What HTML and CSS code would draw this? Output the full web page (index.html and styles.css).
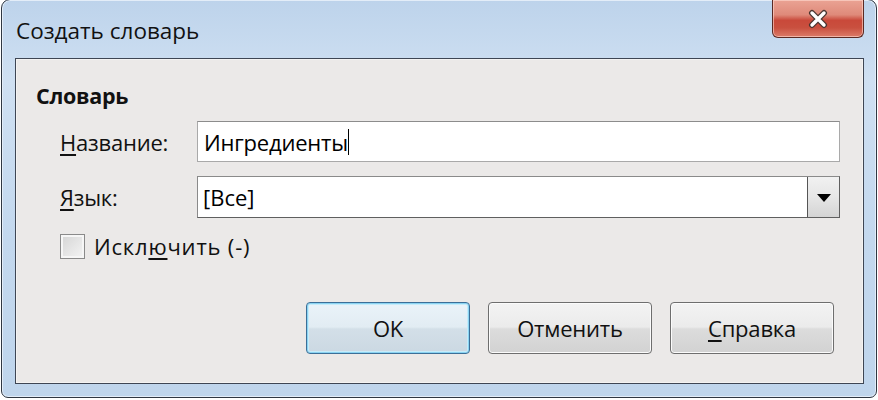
FILE: index.html
```html
<!DOCTYPE html>
<html lang="ru">
<head>
<meta charset="utf-8">
<title>Создать словарь</title>
<link rel="stylesheet" href="styles.css">
</head>
<body>
<div class="window">
  <div class="titlebar">
    <div class="title">Создать словарь</div>
    <div class="close">
      <svg width="24" height="20" viewBox="0 0 24 20">
        <path d="M6 4 L18 16 M18 4 L6 16" stroke="#4a3530" stroke-width="6" stroke-linecap="round" fill="none"/>
        <path d="M6 4 L18 16 M18 4 L6 16" stroke="#ffffff" stroke-width="3.4" stroke-linecap="round" fill="none"/>
      </svg>
    </div>
  </div>
  <div class="client">
    <div class="section">Словарь</div>
    <div class="form">
      <div class="label"><u>Н</u>азвание:</div>
      <div class="input"><span>Ингредиенты</span><span class="caret"></span></div>
      <div class="label"><u>Я</u>зык:</div>
      <div class="combo">
        <div class="combo-value">[Все]</div>
        <div class="combo-btn"><span class="arrow"></span></div>
      </div>
    </div>
    <div class="check-row">
      <span class="checkbox"></span>
      <span class="check-label">Искл<u>ю</u>чить (-)</span>
    </div>
    <div class="buttons">
      <div class="btn default">OK</div>
      <div class="btn">Отменить</div>
      <div class="btn"><u>С</u>правка</div>
    </div>
  </div>
</div>
</body>
</html>
```

FILE: styles.css
```css
* { box-sizing: border-box; }
html, body { margin: 0; padding: 0; background: #ffffff; }
body {
  font-family: "Open Sans", "Noto Sans", sans-serif;
  color: #000;
  width: 878px;
  height: 400px;
  overflow: hidden;
}
.window {
  width: 876px;
  height: 399px;
  margin: -1px 0 0 1px;
  border: 1.5px solid #2f3742;
  border-radius: 9px 9px 7px 7px;
  background: linear-gradient(180deg, #bdd3eb 0%, #cfe0f2 20%, #c3d8ee 60%, #bfd5ec 100%);
  padding: 0 12px 13px 13px;
  display: flex;
  flex-direction: column;
  box-shadow: inset 0 0 0 1px #e3edf8;
}
.titlebar {
  height: 58px;
  flex: none;
  display: flex;
  justify-content: space-between;
  align-items: flex-start;
}
.title {
  font-size: 22.5px;
  padding: 15px 0 0 1px;
  letter-spacing: 0;
  color: #111;
}
.close {
  width: 92px;
  height: 38px;
  border: 1px solid #5b2a24;
  border-top: none;
  border-radius: 0 0 6px 6px;
  background: linear-gradient(180deg, #eaa394 0%, #df8a7a 40%, #c9493a 55%, #c9503f 75%, #dc7b69 100%);
  box-shadow: inset 0 0 0 1px rgba(255,220,210,0.6);
  display: flex;
  align-items: center;
  justify-content: center;
}
.client {
  flex: 1;
  background: #ebe9e8;
  border: 1px solid #3e4654;
  box-shadow: inset 0 0 0 1px #f4f3f2;
  padding: 22px 29px 0 20px;
  display: flex;
  flex-direction: column;
}
.section {
  font-weight: bold;
  font-size: 21.5px;
  height: 30px;
  line-height: 30px;
  color: #111;
  letter-spacing: -0.3px;
}
.form {
  margin-top: 10px;
  display: grid;
  grid-template-columns: 161px 643px;
  row-gap: 14px;
  align-items: center;
}
.label {
  font-size: 22px;
  padding-left: 24px;
  color: #111;
  letter-spacing: -0.2px;
}
u { text-decoration: underline; text-underline-offset: 3px; text-decoration-thickness: 1.5px; }
.input {
  height: 41px;
  background: #fff;
  border: 1px solid #a9a9a9;
  border-top-color: #8c8c8c;
  display: flex;
  align-items: center;
  padding-left: 6px;
  font-size: 22px;
  letter-spacing: -0.2px;
}
.caret {
  width: 1.5px;
  height: 26px;
  background: #000;
}
.combo {
  height: 42px;
  display: flex;
  background: #fff;
  border: 1.5px solid #5f5f5f;
  border-top-color: #8a8a8a;
  border-left-color: #8a8a8a;
}
.combo-value {
  flex: 1;
  font-size: 22px;
  display: flex;
  align-items: center;
  padding-left: 5px;
}
.combo-btn {
  width: 32px;
  border-left: 1.5px solid #555;
  background: linear-gradient(180deg, #f1f1f1 0%, #e6e6e6 50%, #d4d4d4 100%);
  display: flex;
  align-items: center;
  justify-content: center;
}
.arrow {
  width: 0; height: 0;
  border-left: 7px solid transparent;
  border-right: 7px solid transparent;
  border-top: 8px solid #000;
  margin-top: 2px;
}
.check-row {
  margin-top: 15px;
  display: flex;
  align-items: center;
  padding-left: 24px;
  height: 26px;
}
.checkbox {
  width: 25px;
  height: 25px;
  border: 1.5px solid #8a8a8a;
  background: linear-gradient(135deg, #d4d4d4 0%, #e8e8e8 60%, #f4f4f4 100%);
  box-shadow: inset 0 0 0 2px #f6f6f6;
}
.check-label {
  font-size: 22px;
  margin-left: 9px;
  color: #111;
  letter-spacing: 0.8px;
}
.buttons {
  margin-top: 43px;
  display: flex;
  justify-content: flex-end;
  gap: 18px;
}
.btn {
  width: 164px;
  height: 52px;
  border: 1.5px solid #6e6e6e;
  border-radius: 4px;
  background: linear-gradient(180deg, #f3f3f3 0%, #ebebeb 48%, #dcdcdc 52%, #d2d2d2 100%);
  box-shadow: inset 0 0 0 1px #fbfbfb;
  display: flex;
  align-items: center;
  justify-content: center;
  font-size: 22px;
  color: #111;
  letter-spacing: -0.2px;
}
.btn.default {
  border-color: #3b6f98;
  background: linear-gradient(180deg, #eaf3f9 0%, #e2ecf3 48%, #d3dfe8 52%, #cbd8e2 100%);
  box-shadow: inset 0 0 0 1px #8ad3f2, inset 0 0 0 2px #c6ecfa;
}
```
